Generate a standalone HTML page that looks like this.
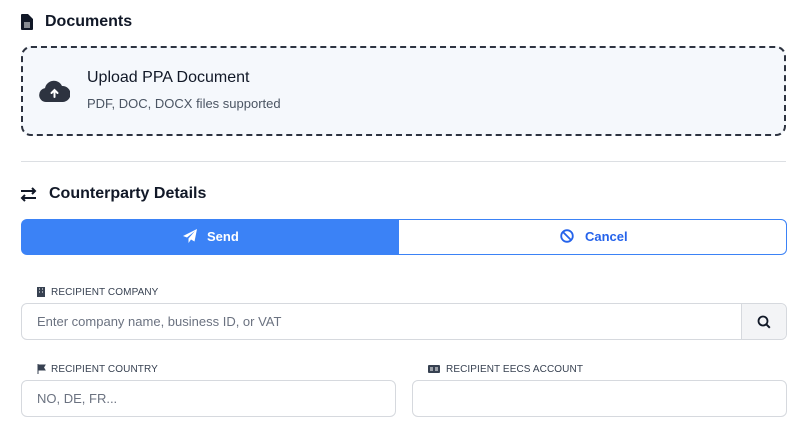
<!DOCTYPE html>
<html><head><style>
*{box-sizing:border-box;margin:0;padding:0}
body{width:800px;height:448px;background:#fff;font-family:"Liberation Sans",sans-serif;color:#1f2937;position:relative;overflow:hidden}
.abs{position:absolute}
.h{font-size:16px;font-weight:bold;color:#111827}
.lbl{font-size:10px;color:#374151;letter-spacing:.1px}
.inp{border:1px solid #d6d9de;border-radius:6px;background:#fff}
.ph{font-size:13px;color:#6b7280}
</style></head><body>
<svg class="abs" style="left:21px;top:14px" width="12" height="16" viewBox="0 0 12 16"><path d="M1 0h6l5 5v10a1 1 0 0 1-1 1H1a1 1 0 0 1-1-1V1a1 1 0 0 1 1-1z" fill="#111827"/><path d="M3 9h6M3 11h6M3 13h6" stroke="#fff" stroke-width="1"/></svg>
<div class="abs h" style="left:45px;top:13px">Documents</div>
<div class="abs" style="left:21px;top:46px;width:765px;height:90px;border:2px dashed #2d3340;border-radius:10px;background:#f5f8fc"></div>
<svg class="abs" style="left:39px;top:80px" width="31" height="23" viewBox="0 0 31 23"><path d="M7 22a7 7 0 0 1-1-13.9A9 9 0 0 1 23 6a7.5 7.5 0 0 1 1 16z" fill="#2d3340"/><path d="M15.5 17V10M12.5 13l3-3 3 3" stroke="#fff" stroke-width="2" fill="none" stroke-linecap="round"/></svg>
<div class="abs" style="left:87px;top:69px;font-size:16px;color:#111827">Upload PPA Document</div>
<div class="abs" style="left:87px;top:96px;font-size:13px;color:#4b5563">PDF, DOC, DOCX files supported</div>
<div class="abs" style="left:21px;top:161px;width:765px;height:1px;background:#dcdfe3"></div>
<svg class="abs" style="left:20px;top:187px" width="17" height="15" viewBox="0 0 17 15"><path d="M1 4h14M12 1l3 3-3 3M16 11H2M5 8l-3 3 3 3" stroke="#111827" stroke-width="2" fill="none"/></svg>
<div class="abs h" style="left:49px;top:185px">Counterparty Details</div>
<div class="abs" style="left:21px;top:219px;width:378px;height:36px;background:#3b82f6;border-radius:6px 0 0 6px"></div>
<svg class="abs" style="left:183px;top:229px" width="14" height="14" viewBox="0 0 14 14"><path d="M14 0L0 7l4 1.5L12 2 5.5 9.5V14l2.5-3.5 3.5 2z" fill="#fff"/></svg>
<div class="abs" style="left:207px;top:229px;font-size:13px;font-weight:bold;color:#fff">Send</div>
<div class="abs" style="left:398px;top:219px;width:389px;height:36px;border:1px solid #3b82f6;border-radius:0 6px 6px 0"></div>
<svg class="abs" style="left:560px;top:229px" width="14" height="14" viewBox="0 0 14 14"><circle cx="7" cy="7" r="5.8" stroke="#2563eb" stroke-width="1.8" fill="none"/><path d="M3 3l8 8" stroke="#2563eb" stroke-width="1.8"/></svg>
<div class="abs" style="left:585px;top:229px;font-size:13px;font-weight:bold;color:#2563eb">Cancel</div>
<svg class="abs" style="left:37px;top:287px" width="8" height="10"><rect width="8" height="10" fill="#374151"/><path d="M2 2h1M5 2h1M2 5h1M5 5h1" stroke="#fff"/></svg>
<div class="abs lbl" style="left:51px;top:287px">RECIPIENT COMPANY</div>
<div class="abs inp" style="left:21px;top:303px;width:766px;height:37px"></div>
<div class="abs" style="left:741px;top:304px;width:45px;height:35px;background:#f3f4f6;border-left:1px solid #d6d9de;border-radius:0 6px 6px 0"></div>
<svg class="abs" style="left:757px;top:315px" width="14" height="14" viewBox="0 0 14 14"><circle cx="6" cy="6" r="4.5" stroke="#111827" stroke-width="1.8" fill="none"/><path d="M9.3 9.3l3.5 3.5" stroke="#111827" stroke-width="2"/></svg>
<div class="abs ph" style="left:37px;top:314px">Enter company name, business ID, or VAT</div>
<svg class="abs" style="left:37px;top:364px" width="9" height="10"><path d="M1 0v10M1 1h7l-1.5 2.5L8 6H1" fill="#374151" stroke="#374151"/></svg>
<div class="abs lbl" style="left:51px;top:364px">RECIPIENT COUNTRY</div>
<div class="abs inp" style="left:21px;top:380px;width:375px;height:37px"></div>
<div class="abs ph" style="left:37px;top:391px">NO, DE, FR...</div>
<svg class="abs" style="left:428px;top:365px" width="12" height="8"><rect width="12" height="8" rx="1" fill="#374151"/><path d="M2 3h3M2 5h3M7 3h3M7 5h3" stroke="#fff"/></svg>
<div class="abs lbl" style="left:446px;top:364px">RECIPIENT EECS ACCOUNT</div>
<div class="abs inp" style="left:412px;top:380px;width:375px;height:37px"></div>
</body></html>
